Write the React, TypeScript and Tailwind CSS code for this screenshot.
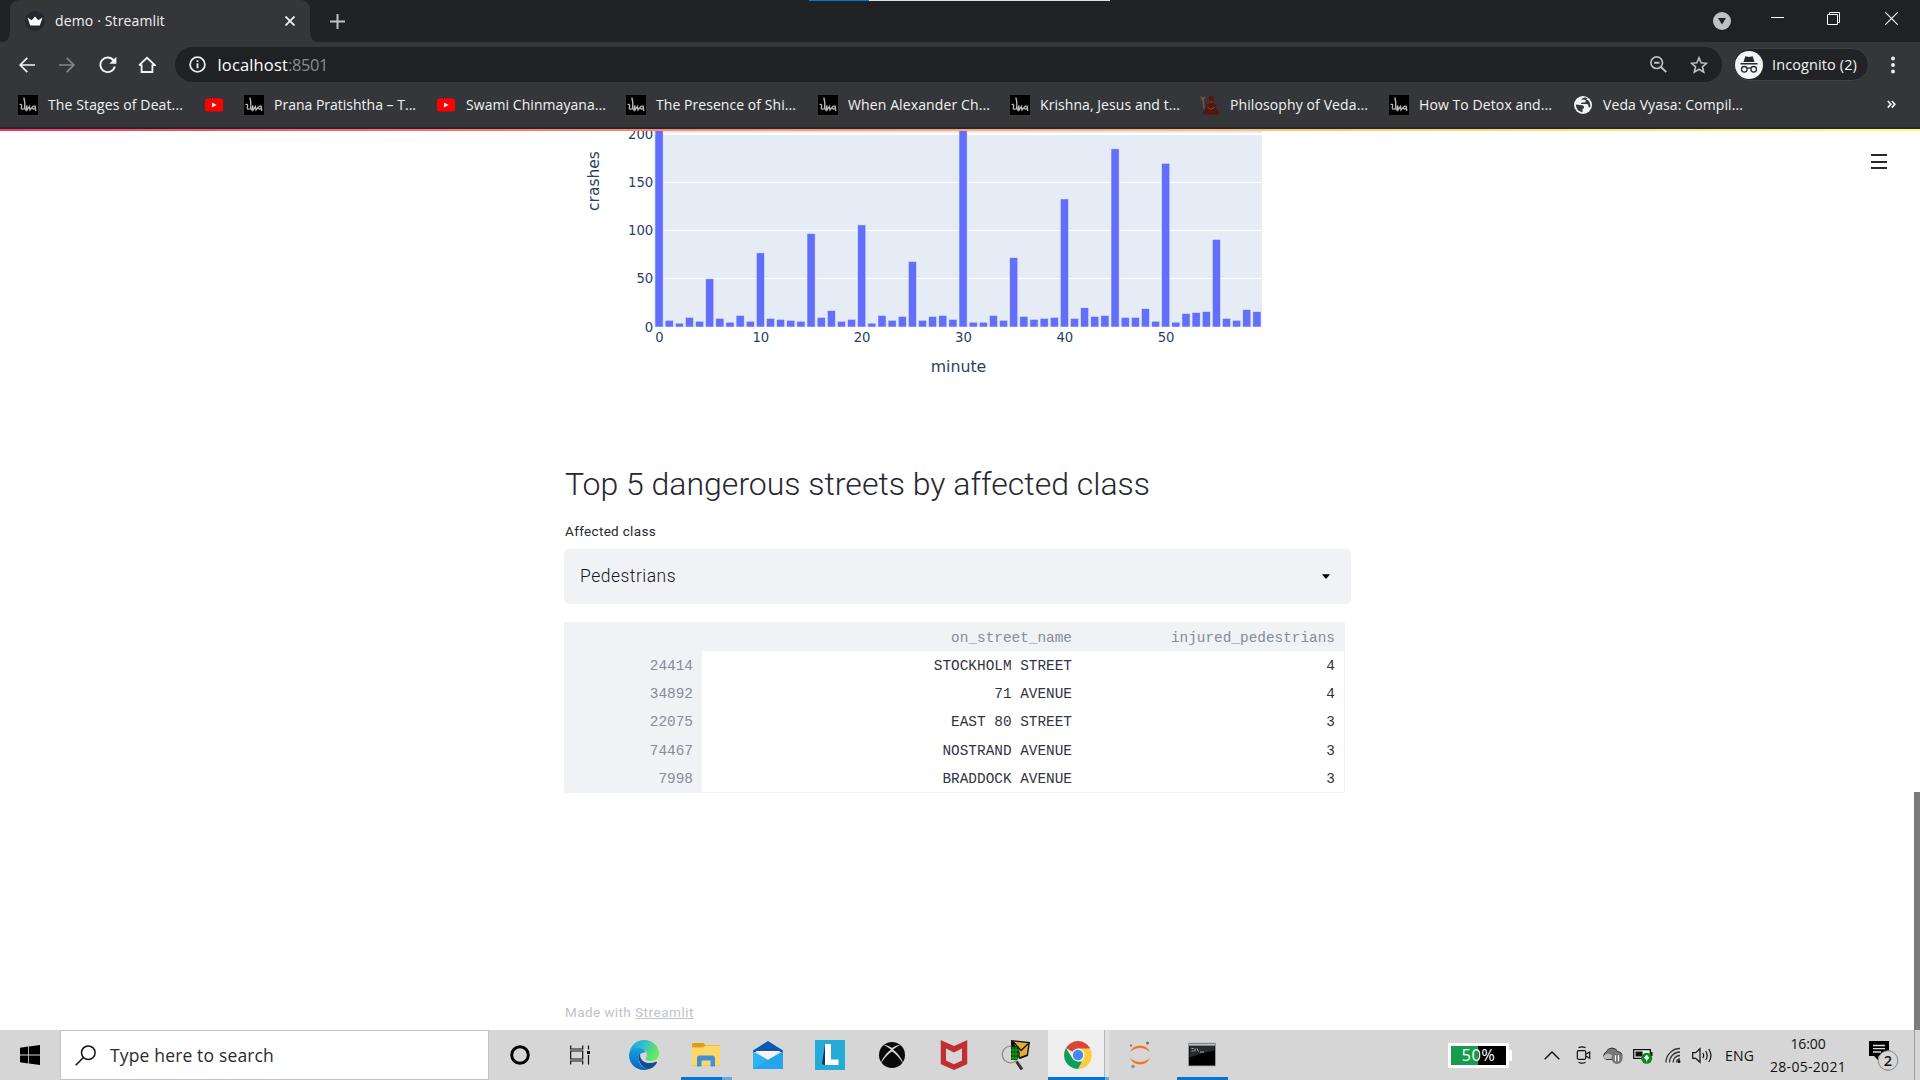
import { useLayoutEffect, useRef } from "react";
import type { ReactNode } from "react";

const UI = "font-['Open_Sans','Noto_Sans',sans-serif]";

/** One line of text, tracked so that it takes up exactly `width` pixels. */
function Fit({ width, className = "", children }: { width: number; className?: string; children: string }) {
  const ref = useRef<HTMLSpanElement>(null);
  useLayoutEffect(() => {
    const el = ref.current;
    if (!el) return;
    el.style.letterSpacing = "0px";
    const natural = el.getBoundingClientRect().width;
    el.style.letterSpacing = `${(width - natural) / children.length}px`;
  }, [width, children]);
  return (
    <span ref={ref} className={`inline-block shrink-0 whitespace-nowrap ${className}`}>
      {children}
    </span>
  );
}

/* ---------- favicons ---------- */

function ScriptIcon() {
  return (
    <svg viewBox="0 0 20 20" className="h-5 w-5 shrink-0">
      <rect width="20" height="20" fill="#000" />
      <path d="M5.800 2.500c1 3 1.400 7 .6 12M1.500 9.500c1.500-.6 2.500.2 2 2-.4 1.800-.8 3.300 2.200 2.300M7.500 15.500l1.300-5 .2 4.500 2.500-3.500.5 3.500 2.500-3c1.800-1.500 3.500-.8 2.800.8s-2.800 1.500-2.800.2M17.300 13l.6 3" fill="none" stroke="#b9b9b9" strokeWidth="1.300" />
    </svg>
  );
}

function YoutubeIcon() {
  return (
    <svg viewBox="0 0 20 20" className="h-5 w-5 shrink-0">
      <rect x="1" y="3.500" width="18" height="13" rx="2.500" fill="#f00" />
      <path d="M8 7.500v5l4.500-2.500z" fill="#fff" />
    </svg>
  );
}

function SageIcon() {
  return (
    <svg viewBox="0 0 20 20" className="h-5 w-5 shrink-0">
      <path d="M9 1.500q2.500-1.500 4.500 0l.6 4-1.100 2.500 3 2 .8 4.500 2.700 3-1 2H3.500l-1-2 3-3 1-4.500 3-2-.9-2.500z" fill="#57150f" />
      <path d="M3 4.500l1 9M1 1.500l1.500 3.200L5 2" stroke="#79534f" strokeWidth="1.500" fill="none" />
      <path d="M9.500 6l1.600 1.500L13 6M7.500 12l3.500 2.500 3.800-2.500" stroke="#8a4b42" strokeWidth=".9" fill="none" />
    </svg>
  );
}

function GlobeIcon() {
  return (
    <svg viewBox="0 0 20 20" className="h-5 w-5 shrink-0">
      <circle cx="10" cy="10" r="9" fill="#f1f3f4" />
      <path d="M2.800 9.500l6.200.8q2 .2 2 2v1.200H9.500v3.700Q3 16 2.800 9.500zM8 4.500q4-3.500 6.500-.7l-2 1.700v2h-3q-2 0-1.500 1.500h5.500q2 0 2 2v1.200h1.800q.3-4.700-2.300-7.200" fill="#35363a" />
    </svg>
  );
}

const bookmarks: { icon: () => ReactNode; text?: string; w?: number }[] = [
  { icon: ScriptIcon, text: "The Stages of Deat...", w: 135 },
  { icon: YoutubeIcon },
  { icon: ScriptIcon, text: "Prana Pratishtha – T...", w: 142 },
  { icon: YoutubeIcon, text: "Swami Chinmayana...", w: 140 },
  { icon: ScriptIcon, text: "The Presence of Shi...", w: 140 },
  { icon: ScriptIcon, text: "When Alexander Ch...", w: 142 },
  { icon: ScriptIcon, text: "Krishna, Jesus and t...", w: 140 },
  { icon: SageIcon, text: "Philosophy of Veda...", w: 138 },
  { icon: ScriptIcon, text: "How To Detox and...", w: 133 },
  { icon: GlobeIcon, text: "Veda Vyasa: Compil...", w: 140 },
];

/* ---------- browser chrome ---------- */

function TabStrip() {
  return (
    <div className="relative flex h-[42px] bg-[#202124]">
      <div className="flex w-[10px] items-end">
        <svg viewBox="0 0 10 10" className="h-[10px] w-[10px]"><path d="M10 0v10H0q10 0 10-10z" fill="#35363a" /></svg>
      </div>
      <div className="flex w-[300px] items-center rounded-t-[9px] bg-[#35363a] pl-[15px]">
        <svg viewBox="0 0 20 20" className="h-5 w-5 shrink-0">
          <circle cx="10" cy="10" r="10" fill="#262730" />
          <path d="M2.500 6.500l4.200 2.800L10 5.500l3.300 3.800 4.200-2.800-2.700 8H5.200z" fill="#fff" />
        </svg>
        <Fit width={110} className="ml-[10px] text-[14px] leading-5 text-[#f1f3f4]">demo · Streamlit</Fit>
        <svg viewBox="0 0 10 10" className="ml-[120px] h-[10px] w-[10px]"><path d="M.5.5l9 9M9.500.5l-9 9" stroke="#f1f3f4" strokeWidth="1.800" /></svg>
      </div>
      <div className="flex w-[10px] items-end">
        <svg viewBox="0 0 10 10" className="h-[10px] w-[10px]"><path d="M0 0v10h10Q0 10 0 0z" fill="#35363a" /></svg>
      </div>
      <div className="flex flex-1 items-center pl-[10px]">
        <svg viewBox="0 0 15 15" className="h-[15px] w-[15px]"><path d="M7.500 0v15M0 7.500h15" stroke="#bdc1c6" strokeWidth="2" /></svg>
      </div>
      <div className="flex w-[207px] items-start">
        <svg viewBox="0 0 18 18" className="mt-[12px] h-[18px] w-[18px]"><circle cx="9" cy="9" r="9" fill="#bdc1c6" /><path d="M5 6h8l-4 6.500z" fill="#202124" /></svg>
        <svg viewBox="0 0 13 13" className="ml-[40px] mt-[12px] h-[13px] w-[13px]"><path d="M0 5.500h13" stroke="#fff" /></svg>
        <svg viewBox="0 0 13 13" className="ml-[43px] mt-[12px] h-[13px] w-[13px]"><path d="M.5 2.500h10v10H.5zM2.500 2V.5h10v10H11" fill="none" stroke="#fff" /></svg>
        <svg viewBox="0 0 13 13" className="ml-[45px] mt-[12px] h-[13px] w-[13px]"><path d="M.3.3l12.400 12.400M12.700.3L.3 12.700" stroke="#fff" strokeWidth="1.100" /></svg>
      </div>
      <div className="absolute left-[809px] top-0 flex h-px">
        <div className="w-[60px] bg-[#0078d7]" />
        <div className="w-[241px] bg-[#dfe3df]" />
      </div>
    </div>
  );
}

function Toolbar() {
  return (
    <div className="flex h-[45px] items-center bg-[#35363a]">
      <div className="flex w-[175px] items-center pl-[19px]">
        <svg viewBox="0 0 16 16" className="h-4 w-4"><path d="M16 8H1.500M8.300.8L1.200 8l7.100 7.200" stroke="#f1f3f4" strokeWidth="1.700" fill="none" /></svg>
        <svg viewBox="0 0 16 16" className="ml-[24px] h-4 w-4"><path d="M0 8h14.500M7.700.8L14.800 8l-7.100 7.200" stroke="#85868a" strokeWidth="1.700" fill="none" /></svg>
        <svg viewBox="0 0 18 18" className="ml-[24px] h-[18px] w-[18px]"><path d="M15.800 10.500A7.300 7.300 0 1 1 14.500 4.300" stroke="#f1f3f4" strokeWidth="1.900" fill="none" /><path d="M17.400.8v7h-7z" fill="#f1f3f4" /></svg>
        <svg viewBox="0 0 18 18" className="ml-[21px] h-[18px] w-[18px]"><path d="M3.600 8.500V16h10.800V8.500M1.200 9.200L9 1.800l7.800 7.400h-2.400M1.200 9.200h2.400" stroke="#f1f3f4" strokeWidth="1.800" fill="none" /></svg>
      </div>
      <div className="flex h-[35px] w-[1547px] items-center rounded-full bg-[#202124] pl-[14px]">
        <svg viewBox="0 0 17 17" className="h-[17px] w-[17px]"><circle cx="8.500" cy="8.500" r="7.400" fill="none" stroke="#e8eaed" strokeWidth="1.800" /><path d="M8.500 7.300v5M8.500 4.200v1.900" stroke="#e8eaed" strokeWidth="1.900" /></svg>
        <div className="ml-[11.500px] flex flex-1 text-[16.500px] leading-6">
          <Fit width={70.5} className="text-white">localhost</Fit>
          <Fit width={40} className="text-[#8a8d91]">:8501</Fit>
        </div>
        <svg viewBox="0 0 17 17" className="h-[17px] w-[17px]"><circle cx="6.700" cy="6.700" r="5.800" fill="none" stroke="#bdc1c6" strokeWidth="1.700" /><path d="M4 6.700h5.500M11 11l5.200 5.200" stroke="#bdc1c6" strokeWidth="1.900" /></svg>
        <svg viewBox="0 0 18 18" className="ml-[23px] mr-[14px] h-[18px] w-[18px]"><path d="M9 1.800l2.100 5 5.400.5-4.100 3.500 1.300 5.300L9 13.300l-4.700 2.800 1.300-5.300L1.500 7.300l5.400-.5z" fill="none" stroke="#bdc1c6" strokeWidth="1.600" /></svg>
      </div>
      <div className="ml-[11px] flex h-[33px] w-[136px] items-center rounded-full border border-[#404145] bg-[#222327] pl-[1px]">
        <svg viewBox="0 0 28 28" className="h-7 w-7">
          <circle cx="14" cy="14" r="14" fill="#f1f3f4" />
          <path d="M10.300 5.200l3.700.9 3.700-.9L19.500 11h-11z" fill="#26272b" />
          <path d="M5.500 12.700h17M12 17.500q2-1.200 4 0" stroke="#26272b" strokeWidth="1.400" fill="none" />
          <circle cx="9.300" cy="18.300" r="2.800" fill="none" stroke="#26272b" strokeWidth="1.300" />
          <circle cx="18.700" cy="18.300" r="2.800" fill="none" stroke="#26272b" strokeWidth="1.300" />
        </svg>
        <Fit width={85} className="ml-[9px] text-[14.500px] leading-5 text-[#f1f3f4]">Incognito (2)</Fit>
      </div>
      <svg viewBox="0 0 4 18" className="ml-[21.500px] h-[18px] w-1"><circle cx="2" cy="2.500" r="2" fill="#e8eaed" /><circle cx="2" cy="9" r="2" fill="#e8eaed" /><circle cx="2" cy="15.500" r="2" fill="#e8eaed" /></svg>
    </div>
  );
}

function BookmarksBar() {
  return (
    <div className="flex h-[42px] justify-between border-b-2 border-[#27282b] bg-[#35363a] pl-[18px] pr-[24px] pb-[4px]">
      <div className="grid grid-cols-[186px_40px_192px_190px_192px_192px_190px_189px_184px_180px] items-center">
        {bookmarks.map((b, i) => (
          <div key={i} className="flex items-center gap-[10px]">
            <b.icon />
            {b.text && <Fit width={b.w ?? 0} className="text-[14px] leading-5 text-[#f1f3f4]">{b.text}</Fit>}
          </div>
        ))}
      </div>
      <svg viewBox="0 0 9 9" className="mt-[13px] h-[9px] w-[9px]"><path d="M.8 1l3 3.300-3 3.300M4.800 1l3 3.300-3 3.300" stroke="#f1f3f4" strokeWidth="1.700" fill="none" /></svg>
    </div>
  );
}

/* ---------- chart ---------- */

const crashes = [
  400, 7, 4, 10, 6, 50, 9, 5, 12, 6, 77, 9, 8, 7, 6, 97, 10, 17, 6, 8, 106, 4, 12, 7, 11, 68, 7, 11, 12, 8,
  400, 5, 5, 12, 7, 72, 11, 8, 9, 10, 133, 9, 20, 11, 12, 185, 10, 10, 19, 6, 170, 5, 14, 15, 16, 91, 9, 7, 18, 16,
];

function CrashChart() {
  const left = 90;
  const base = 196;
  const step = 608 / 60;
  const unit = 0.963;
  return (
    <svg viewBox="0 0 787 260" className="block h-[260px] w-[787px] font-['DejaVu_Sans',Verdana,sans-serif]">
      <rect x={left} y="0" width="608" height={base} fill="#e5ecf6" />
      {[50, 100, 150].map((v) => (
        <rect key={v} x={left} y={Math.round(base - v * unit) - 1} width="608" height="1" fill="#fff" />
      ))}
      <rect x={left} y="2" width="608" height="2" fill="#fff" />
      {crashes.map((v, i) => {
        const h = Math.min(v * unit, base + 5);
        return (
          <rect key={i} x={left + i * step + step * 0.1} y={base - h} width={step * 0.8} height={h} fill="#636efa" stroke="#e5ecf6" strokeWidth="0.560" />
        );
      })}
      {[0, 50, 100, 150, 200].map((v) => (
        <text key={v} x="89.200" y={base - v * unit + 4.5} textAnchor="end" fontSize="13.200" fill="#2a3f5f">{v}</text>
      ))}
      {[0, 10, 20, 30, 40, 50].map((v) => (
        <text key={v} x={left + (v + 0.5) * step + 0.4} y="211" textAnchor="middle" fontSize="13.200" fill="#2a3f5f">{v}</text>
      ))}
      <text x="394.500" y="241" textAnchor="middle" fontSize="15.750" fill="#2a3f5f">minute</text>
      <text transform="translate(35 50) rotate(-90)" textAnchor="middle" fontSize="15.500" fill="#2a3f5f">crashes</text>
    </svg>
  );
}

/* ---------- streamlit page ---------- */

const rows: [string, string, string][] = [
  ["24414", "STOCKHOLM STREET", "4"],
  ["34892", "71 AVENUE", "4"],
  ["22075", "EAST 80 STREET", "3"],
  ["74467", "NOSTRAND AVENUE", "3"],
  ["7998", "BRADDOCK AVENUE", "3"],
];

function StreetsTable() {
  return (
    <div className="mt-[18px] w-[781px] border border-[#f0f2f6] font-['Liberation_Mono','DejaVu_Sans_Mono',monospace] text-[14.400px] text-[#31333f]">
      <div className="grid h-[28px] grid-cols-[137px_380px_262px] bg-[#f0f2f6] text-right leading-[30px] text-[#898b99]">
        <span />
        <span className="pr-[10px]">on_street_name</span>
        <span className="pr-[9px]">injured_pedestrians</span>
      </div>
      {rows.map(([id, street, n]) => (
        <div key={id} className="grid h-[28.200px] grid-cols-[137px_380px_262px] text-right leading-[30px]">
          <span className="h-[28.200px] bg-[#f0f2f6] pr-[9px] text-[#898b99]">{id}</span>
          <span className="pr-[10px]">{street}</span>
          <span className="pr-[9px]">{n}</span>
        </div>
      ))}
    </div>
  );
}

function Page() {
  return (
    <main className="relative h-[901px] overflow-hidden bg-white">
      <div className="h-[2px] bg-linear-to-r from-[#f63366] to-[#fffd80]" />
      <div className="ml-[564px] flex w-[787px] flex-col font-[Roboto,sans-serif] text-[#262730]">
        <CrashChart />
        <h2 className="mt-[70px] h-[46px] pl-px text-[32px] leading-[47px] font-[350]">
          <Fit width={585}>Top 5 dangerous streets by affected class</Fit>
        </h2>
        <label className="mt-[14px] h-[20px] pl-px text-[13.500px] leading-[20px]">
          <Fit width={91}>Affected class</Fit>
        </label>
        <div className="mt-[8px] flex h-[55px] items-center justify-between rounded-[5px] bg-[#f0f2f6] pl-4 pr-[21px] text-[17.500px] font-[350] text-[#16171f]">
          <Fit width={96}>Pedestrians</Fit>
          <svg viewBox="0 0 8 5" className="h-[5px] w-2"><path d="M0 .2h8L4.500 4.500h-1z" fill="#000" /></svg>
        </div>
        <StreetsTable />
        <footer className="mt-[209px] flex h-[20px] gap-[4px] pl-px text-[13.500px] leading-[20px] text-[#bfc2ce]">
          <Fit width={66}>Made with</Fit>
          <Fit width={59} className="underline">Streamlit</Fit>
        </footer>
      </div>
      <div className="absolute left-[1871px] top-[25px] flex w-4 flex-col gap-[4.500px]">
        <div className="h-[2px] bg-[#262730]" />
        <div className="h-[2px] bg-[#262730]" />
        <div className="h-[2px] bg-[#262730]" />
      </div>
      <div className="absolute right-0 top-[663px] h-[238px] w-[6px] bg-[#7b7b7b]" />
    </main>
  );
}

/* ---------- taskbar icons ---------- */

function EdgeIcon() {
  return (
    <svg viewBox="0 0 30 30" className="h-[30px] w-[30px]">
      <defs>
        <linearGradient id="edgeTop" x1="0" y1="0" x2="1" y2=".4"><stop offset="0" stopColor="#0fa2e0" /><stop offset=".5" stopColor="#35c1c9" /><stop offset="1" stopColor="#66eb5a" /></linearGradient>
        <linearGradient id="edgeLow" x1="0" y1="0" x2="0" y2="1"><stop offset="0" stopColor="#1a9fe6" /><stop offset="1" stopColor="#0766c0" /></linearGradient>
      </defs>
      <path d="M.5 12C2 5 7.500 0 15 0c8.500 0 15 6 15 13.200 0 5-4 7.800-8 7.800-4.500 0-6-1.800-5-3 1.500-2 1.400-5-1-7.300C12 7.500 3.500 7.500.5 12z" fill="url(#edgeTop)" />
      <path d="M0 15C0 10 5 7.300 10 7.800c4 .5 6.300 3 6.500 5-4.500-1.300-7.500 3-6.500 8 .9 4.600 4.500 8.200 9 8.200-1 .6-2.700 1-4 1C6.500 30 0 23.500 0 15z" fill="url(#edgeLow)" />
      <path d="M11 13.500c-3.200 5 .2 14 7.500 15.700 4 .2 8-3.500 9.500-6.700.2-.6-.3-1-.9-.7C19 25 10.500 22 11 13.500z" fill="#124d93" />
    </svg>
  );
}

function FolderIcon() {
  return (
    <svg viewBox="0 0 28 24" className="h-6 w-7">
      <path d="M0 1.500Q0 0 1.500 0h10l2 2H27q1 0 1 1v19.500H0z" fill="#dfa010" />
      <path d="M0 4.500h11l2.500-2H27q1 0 1 1V22.500H0z" fill="#ffd766" />
      <path d="M5 23.500v-8.500q0-2.500 2.500-2.500h13q2.500 0 2.500 2.500v8.500h-4.500v-6h-9v6z" fill="#3c91d8" />
    </svg>
  );
}

function MailIcon() {
  return (
    <svg viewBox="0 0 30 28" className="h-7 w-[30px]">
      <path d="M0 9.500L15 0l15 9.500V11H0z" fill="#0e59b0" />
      <path d="M2.500 10h25L15 19z" fill="#f4f4f4" />
      <path d="M0 10.500l15 8.500 15-8.500V28H0z" fill="#2fb2f2" />
      <path d="M15 19l15-8.500V28z" fill="#27a3ec" />
      <path d="M15 19l15 9H0z" fill="#1c97e4" opacity=".5" />
    </svg>
  );
}

function LIcon() {
  return (
    <svg viewBox="0 0 30 30" className="h-[30px] w-[30px]">
      <rect width="30" height="30" fill="#26aad8" />
      <path d="M10 4L7 24l5 1z" fill="#0f3567" />
      <path d="M10 4h6v15.500h7.500V25H10z" fill="#fff" />
      <path d="M7 24l3-1.500v2.500z" fill="#123c70" />
    </svg>
  );
}

function XboxIcon() {
  return (
    <svg viewBox="0 0 26 26" className="h-[26px] w-[26px]">
      <circle cx="13" cy="13" r="13" fill="#0a0a0a" />
      <path d="M1.800 22C3 16 8 10 13 7c5 3 10 9 11.200 15C21.500 17 17 12 13 9.500 9 12 4.500 17 1.800 22z" fill="#d6d6d6" />
      <path d="M4.500 3.500c3-1 6 .8 8.500 2.500 2.500-1.700 5.500-3.500 8.500-2.500-3 .5-5.500 2.300-8.500 5.200-3-2.900-5.500-4.700-8.500-5.200z" fill="#d6d6d6" />
    </svg>
  );
}

function ShieldIcon() {
  return (
    <svg viewBox="0 0 27 30" className="h-[30px] w-[27px] -translate-x-[0.500px]">
      <path d="M0 0l13.500 6L27 0v24L13.500 30 0 24zM5.500 8.500v12l8 3.800 8-3.800v-12l-8 4z" fill="#c02e30" fillRule="evenodd" />
    </svg>
  );
}

function InspectMailIcon() {
  return (
    <svg viewBox="0 0 30 30" className="h-[30px] w-[30px]">
      <path d="M10 0l19 2-2 14-8 3-9-5z" fill="#111" />
      <path d="M12.500 1.500l15 1.800-1.700 11.200-6.800 2.500z" fill="#e5ac36" />
      <path d="M12.500 2l7.500 8.500 7.500-7" stroke="#111" strokeWidth="1.300" fill="none" />
      <circle cx="9.500" cy="14.500" r="8.300" fill="#d4d6d4" stroke="#8b8d8b" strokeWidth="1.300" />
      <path d="M10 6h7l2 8-3 6h-6z" fill="#07380b" />
      <path d="M12 7v13M15 7v13M10 10h8M10 14h8M10 18h7" stroke="#15b01a" strokeWidth="1.100" />
      <path d="M15.500 21.500l5.500 8" stroke="#333" strokeWidth="3" />
    </svg>
  );
}

function ChromeIcon() {
  return (
    <svg viewBox="0 0 28 28" className="h-7 w-7">
      <path d="M14 14L1.900 7A14 14 0 0 1 26.100 7z" fill="#db4437" />
      <path d="M14 7.500h12.300A14 14 0 0 1 14 28l5.600-10.700z" fill="#ffcd40" />
      <path d="M1.900 7l6.500 10.300L14 20.500h4L14 28A14 14 0 0 1 1.900 7z" fill="#0f9d58" />
      <circle cx="14" cy="14" r="6.500" fill="#f4f4f4" />
      <circle cx="14" cy="14" r="5.200" fill="#4688f1" />
    </svg>
  );
}

function JupyterIcon() {
  return (
    <svg viewBox="0 0 22 28" className="h-7 w-[22px]">
      <path d="M1 11a11 11 0 0 1 20 0q-10-8-20 0zM1 17a11 11 0 0 0 20 0q-10 8-20 0z" fill="#f37726" />
      <circle cx="18.500" cy="2" r="1.500" fill="#6d6e71" />
      <circle cx="2" cy="4.500" r="1.100" fill="#6d6e71" />
      <circle cx="4" cy="25.500" r="1.800" fill="#919294" />
    </svg>
  );
}

function TerminalIcon() {
  return (
    <svg viewBox="0 0 28 24" className="h-6 w-7 -translate-y-[0.500px]">
      <rect x=".5" y=".5" width="27" height="23" rx="1" fill="#000" stroke="#8f969e" />
      <rect x="1" y="1" width="26" height="2.200" fill="#b9c2cc" />
      <path d="M1.500 3.500h25V8Q14 10 1.500 15z" fill="#2a2a2a" />
      <path d="M3.500 6h2M3.500 8.500h2M7 6v3M9 6l1.500 3M12 9.500h4" stroke="#bbb" strokeWidth=".9" />
    </svg>
  );
}

function CortanaIcon() {
  return <svg viewBox="0 0 20 20" className="h-5 w-5"><circle cx="10" cy="10" r="8.300" fill="none" stroke="#000" strokeWidth="2.900" /></svg>;
}

function TaskViewIcon() {
  return (
    <svg viewBox="0 0 21 20" className="-ml-1 h-5 w-[21px]">
      <path d="M.7.500v3.500h12V.500M.7 19.500V16h12v3.500M.7 6h12v8H.7zM18.500.500v4M18.500 10v9.500" fill="none" stroke="#111" strokeWidth="1.200" />
      <rect x="17" y="6" width="3" height="3" fill="#111" />
    </svg>
  );
}

const apps: { icon: () => ReactNode; state?: "single" | "stack" | "active" }[] = [
  { icon: CortanaIcon },
  { icon: TaskViewIcon },
  { icon: EdgeIcon },
  { icon: FolderIcon, state: "stack" },
  { icon: MailIcon },
  { icon: LIcon },
  { icon: XboxIcon },
  { icon: ShieldIcon },
  { icon: InspectMailIcon },
  { icon: ChromeIcon, state: "active" },
  { icon: JupyterIcon },
  { icon: TerminalIcon, state: "single" },
];

function TaskbarApp({ icon: Icon, state }: (typeof apps)[number]) {
  return (
    <div className={`relative flex h-[50px] w-[62px] items-center justify-center ${state === "active" ? "border-r-[4px] border-l border-[#e1e1e1] border-l-[#d5d5d5] bg-[#eeeeee] pl-[2px]" : ""}`}>
      <Icon />
      {state === "single" && <div className="absolute bottom-0 left-[6px] h-[3px] w-[51px] bg-[#0078d7]" />}
      {state === "stack" && (
        <div className="absolute bottom-0 left-[6px] flex h-[3px]">
          <div className="w-[41px] bg-[#0078d7]" />
          <div className="w-[10px] bg-[#60ace6]" />
        </div>
      )}
      {state === "active" && (
        <div className="absolute bottom-0 left-0 flex h-[3px]">
          <div className="w-[57px] bg-[#0078d7]" />
          <div className="w-[4px] bg-[#60ace6]" />
        </div>
      )}
      {state === "active" && <div className="absolute right-0 top-0 h-[47px] w-px bg-[#b5b5b5]" />}
    </div>
  );
}

function Tray() {
  return (
    <div className="flex flex-1 items-center text-[#111]">
      <div className="ml-[215px] flex items-center">
        <div className="flex h-[25px] w-[61px] items-center justify-center border-[3px] border-white bg-linear-to-r from-[#169c4d] from-50% to-black to-50% text-[16.500px] text-white">
          <Fit width={34}>50%</Fit>
        </div>
        <div className="h-[11px] w-[3px] bg-white" />
      </div>
      <svg viewBox="0 0 16 9" className="ml-[32px] h-[9px] w-4"><path d="M.7 8.300L8 1l7.300 7.300" fill="none" stroke="#111" strokeWidth="1.400" /></svg>
      <svg viewBox="0 0 15 18" className="ml-[16px] h-[18px] w-[15px]"><path d="M2.500 4.700h6q1.200 0 1.200 1.200v6.200q0 1.200-1.200 1.200h-6q-1.200 0-1.200-1.200V5.900q0-1.200 1.200-1.200zM9.700 8.300l4-2.300v6.300l-4-2.300M2.500 1.800q3.500-2 7 0M2.500 16.200q3.500 2 7 0" fill="none" stroke="#111" strokeWidth="1.200" /></svg>
      <svg viewBox="0 0 21 18" className="ml-[11px] h-[18px] w-[21px]"><path d="M4.500 13.500a4 4 0 0 1-.3-7.500Q6 2 10 2q4 0 5.500 3.500 4.500.7 4.500 4.500 0 3.500-4 3.500z" fill="#777" /><path d="M4.500 13.500a4 4 0 0 1-.3-7.500Q6 2 10 2q4 0 5.500 3.500 4.500.7 4.500 4.500 0 3.500-4 3.500z" fill="none" stroke="#333" /><path d="M1.500 10.500Q5 4 15 13H4.500q-2.500 0-3-2.500z" fill="#bdbdbd" /><circle cx="15" cy="12.300" r="5.600" fill="#777" /><path d="M13.500 9.300v6M16.500 9.300v6" stroke="#fff" strokeWidth="1.200" /></svg>
      <svg viewBox="0 0 20 17" className="ml-[10px] h-[17px] w-5"><path d="M.7 2.700h16.600v8.600H.7z" fill="#eee" stroke="#111" strokeWidth="1.300" /><path d="M2.500 4.500h7v5h-7zM18 5h1.500v4H18z" fill="#111" /><circle cx="13.700" cy="11.300" r="5.500" fill="#0b8a1c" /><path d="M13.700 8l2.300 3-2.300 1.500-2.300-1.500zM13.700 11v3.500" fill="#fff" stroke="#fff" strokeWidth=".9" /></svg>
      <svg viewBox="0 0 16 17" className="ml-[12px] h-[17px] w-4"><path d="M1 15.500A14 14 0 0 1 15 1.500M4.500 15.500A10.500 10.500 0 0 1 15 5M8 15.500a7 7 0 0 1 7-7M11.500 15.500A3.500 3.500 0 0 1 15 12" fill="none" stroke="#333" strokeWidth="1.300" /><circle cx="14" cy="14.500" r="1.500" fill="#111" /></svg>
      <svg viewBox="0 0 21 17" className="ml-[11px] h-[17px] w-[21px]"><path d="M.7 5.700h3L8 1.700v13.600l-4.300-4h-3zM10.800 6q1.700 2.500 0 5M13.700 4q3 4.500 0 9M16.800 2q4.400 6.500 0 13" fill="none" stroke="#111" strokeWidth="1.200" /></svg>
      <Fit width={29} className="ml-[12px] text-[14px]">ENG</Fit>
      <div className="ml-[16px] flex w-[76px] flex-col items-center text-[14px] leading-[23px]">
        <Fit width={35}>16:00</Fit>
        <Fit width={76}>28-05-2021</Fit>
      </div>
      <svg viewBox="0 0 32 32" className="ml-[23px] mt-[2px] h-8 w-8">
        <path d="M0 1h20v15H9.500v4.500L5 16H0z" fill="#000" />
        <path d="M4 5.500h12M4 8.700h12M4 12h8" stroke="#ddd" strokeWidth="1.300" />
        <circle cx="19" cy="20.500" r="9.800" fill="#d6d6d6" stroke="#858585" />
        <text x="19" y="26" textAnchor="middle" fontSize="14.500" fontWeight="600" fill="#111">2</text>
      </svg>
      <div className="ml-[13px] h-[50px] w-px bg-[#9d9d9d]" />
    </div>
  );
}

function Taskbar() {
  return (
    <div className="flex h-[50px] bg-[#d6d6d6]">
      <div className="flex w-[60px] items-center justify-center">
        <svg viewBox="0 0 20 20" className="h-5 w-5"><path d="M0 2.800l8.200-1.200v8H0zM9 1.500L20 0v9.600H9zM0 10.400h8.200v8L0 17.200zM9 10.400h11V20L9 18.500z" fill="#000" /></svg>
      </div>
      <div className="flex h-[50px] w-[429px] items-center border border-[#c3c3c3] bg-white pl-[14px]">
        <svg viewBox="0 0 21 21" className="h-[21px] w-[21px]"><circle cx="13.300" cy="7.700" r="6.800" fill="none" stroke="#111" strokeWidth="1.500" /><path d="M8.500 12.500L.7 20.300" stroke="#111" strokeWidth="1.500" /></svg>
        <Fit width={164} className="ml-[14px] text-[17.500px] leading-6 text-[#2b2b2b]">Type here to search</Fit>
      </div>
      {apps.map((a, i) => (
        <TaskbarApp key={i} {...a} />
      ))}
      <Tray />
    </div>
  );
}

export default function App() {
  return (
    <div className={`flex h-[1080px] w-[1920px] flex-col overflow-hidden ${UI}`}>
      <TabStrip />
      <Toolbar />
      <BookmarksBar />
      <Page />
      <Taskbar />
    </div>
  );
}
